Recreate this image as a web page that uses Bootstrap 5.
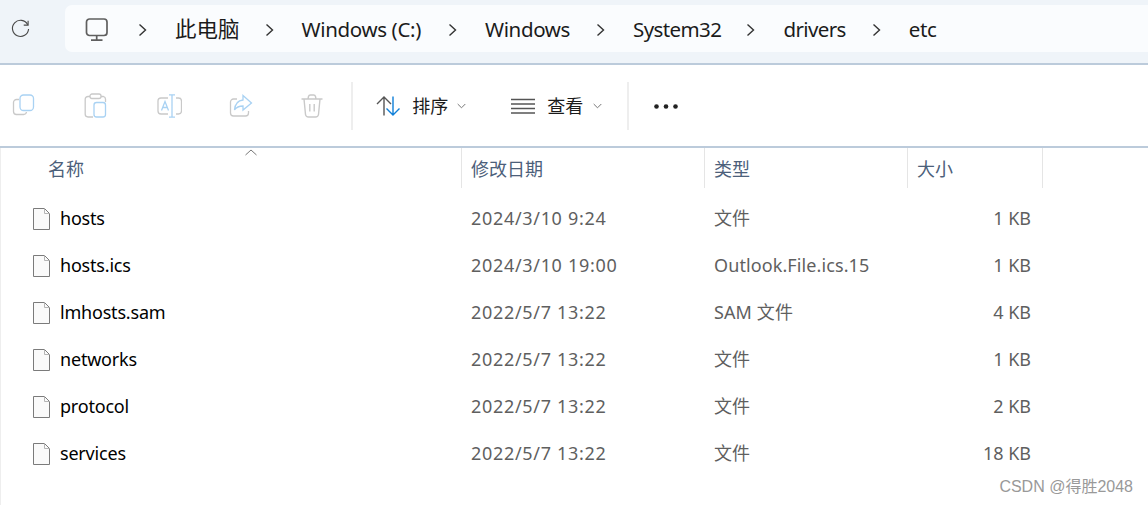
<!DOCTYPE html>
<html lang="zh">
<head>
<meta charset="utf-8">
<title>etc</title>
<link href="https://cdn.jsdelivr.net/npm/bootstrap@5.3.0/dist/css/bootstrap.min.css" rel="stylesheet">
<style>
html,body{margin:0;height:505px;overflow:hidden;background:#fff}
body{font-family:"Noto Sans","Noto Sans CJK SC",sans-serif;color:#1b1b1b;position:relative}
svg{display:block;flex:none}
.addr{height:65px;background:#eff4f9;border-bottom:2px solid #bccbdb;padding:5px 0 0 11px;box-sizing:border-box}
.refresh{width:54px;height:47px}
.crumbs{flex:1;height:47px;background:#fafcfe;border-radius:7px 0 0 7px;padding:2px 0 0 20px;gap:25px;font-size:20.5px;letter-spacing:-.35px;white-space:nowrap}
.crumbs .chev{margin-right:3px}
.crumbs .chev-first{margin-left:4px}
.crumbs .cjk-crumb{font-size:21.5px;letter-spacing:0}
.crumbs .crumb-c{margin-right:2px}
.crumbs .crumb-win{margin-right:1px}
.crumbs .crumb-tight{letter-spacing:-.6px}
.crumbs .crumb-drv{margin-right:1px}
.tools{height:83px;border-bottom:2px solid #bccbdb;padding:1px 0 0 12px;font-size:18px}
.tool-slot{width:72.3px}
.tool-slot-last{width:50px}
.vline{width:2px;height:48px;background:#eeeeee;flex:none}
.cmd{gap:12px}
.cmd-sort{margin-left:23px;gap:11px}
.cmd-view{margin-left:45px}
.cmd-chev{margin-left:-2px}
.vline-second{margin-left:25px}
.dots{margin-left:25px}
.filegrid{display:grid;grid-template-columns:461px 243px 203px 136px}
.head{height:40px;margin-bottom:7px;color:#4c607a;font-size:18px}
.head>div{padding-left:9px;border-left:1px solid #e5e5e5;height:40px;line-height:43px}
.head>div:first-child{border-left:0;padding-left:48px;position:relative}
.head>div:last-child{border-right:1px solid #e5e5e5}
.sort-mark{position:absolute;left:245px;top:1px}
.filerow{height:47px;align-items:center;font-size:18px;color:#5f5f5f}
.filerow>div{padding-left:10px;line-height:47px;white-space:nowrap}
.filerow>div:first-child{padding-left:33px;color:#000;letter-spacing:-.2px}
.filerow>div:nth-child(2){letter-spacing:.68px}
.filerow>div:nth-child(3){letter-spacing:.1px}
.filerow>div:last-child{text-align:right;padding-right:12px;padding-left:0}
.fname{gap:10px}
.mark-text{position:absolute;right:15px;bottom:8px;font-family:"Liberation Sans","Noto Sans CJK SC",sans-serif;font-size:16px;color:#999;line-height:20px}
.leftedge{position:absolute;left:0;top:148px;bottom:0;width:1px;background:#eeeeee}
</style>
</head>
<body>
<div class="addr d-flex">
  <div class="refresh d-flex align-items-center">
    <svg width="19" height="20" viewBox="0 0 20 20" fill="none" stroke="#4a4a4a" stroke-width="1.2"><path d="M17.6 5.5A8.5 8.5 0 1 0 18.5 10"/><path d="M18 1.2V5.9H13.4"/></svg>
  </div>
  <div class="crumbs d-flex align-items-center">
    <svg width="24" height="24" viewBox="0 0 24 24" fill="none" stroke="#5f5f5f" stroke-width="1.7"><rect x="1.5" y="1" width="20.5" height="16.5" rx="3"/><path d="M11.7 18v3.5M6 22.2h11.5"/></svg>
    <svg class="chev chev-first" width="9" height="14" viewBox="0 0 9 14" fill="none" stroke="#333" stroke-width="1.4"><path d="M1.5 1.5 7.5 7l-6 5.5"/></svg>
    <span class="cjk-crumb">此电脑</span>
    <svg class="chev" width="9" height="14" viewBox="0 0 9 14" fill="none" stroke="#333" stroke-width="1.4"><path d="M1.5 1.5 7.5 7l-6 5.5"/></svg>
    <span class="crumb-c">Windows (C:)</span>
    <svg class="chev" width="9" height="14" viewBox="0 0 9 14" fill="none" stroke="#333" stroke-width="1.4"><path d="M1.5 1.5 7.5 7l-6 5.5"/></svg>
    <span class="crumb-win">Windows</span>
    <svg class="chev" width="9" height="14" viewBox="0 0 9 14" fill="none" stroke="#333" stroke-width="1.4"><path d="M1.5 1.5 7.5 7l-6 5.5"/></svg>
    <span class="crumb-tight">System32</span>
    <svg class="chev" width="9" height="14" viewBox="0 0 9 14" fill="none" stroke="#333" stroke-width="1.4"><path d="M1.5 1.5 7.5 7l-6 5.5"/></svg>
    <span class="crumb-tight crumb-drv">drivers</span>
    <svg class="chev" width="9" height="14" viewBox="0 0 9 14" fill="none" stroke="#333" stroke-width="1.4"><path d="M1.5 1.5 7.5 7l-6 5.5"/></svg>
    <span>etc</span>
  </div>
</div>

<div class="tools d-flex align-items-center">
  <div class="tool-slot">
    <svg width="24" height="24" viewBox="0 0 24 24" fill="none" stroke-width="1.3"><path d="M7 5.5H4.5A3 3 0 0 0 1.5 8.5v9A3 3 0 0 0 4.5 20.500h7a3 3 0 0 0 3-2.500" stroke="#c9c9c9"/><rect x="8" y="1" width="13.500" height="15.500" rx="3.500" stroke="#a9d2f3"/></svg>
  </div>
  <div class="tool-slot">
    <svg width="24" height="26" viewBox="0 0 24 26" fill="none" stroke-width="1.3"><path d="M6 3.500H4A2.800 2.800 0 0 0 1.200 6.300v15A2.800 2.800 0 0 0 4 24h5M17 3.500h2.500A2.800 2.800 0 0 1 21.500 6v3" stroke="#c9c9c9"/><rect x="6" y="1" width="11" height="4.500" rx="2" stroke="#c9c9c9"/><rect x="10" y="9.500" width="11.500" height="14.500" rx="2.500" stroke="#a9d2f3"/></svg>
  </div>
  <div class="tool-slot">
    <svg width="25" height="24" viewBox="0 0 25 24" fill="none" stroke-width="1.3"><path d="M11 4H4A3 3 0 0 0 1 7v10a3 3 0 0 0 3 3h7M19 4h2.500a3 3 0 0 1 3 3v10a3 3 0 0 1-3 3H19" stroke="#c9c9c9"/><path d="M12 .8h6M15 .8v22.400M12 23.200h6M4.500 16.500 8 7.500l3.500 9M5.700 13.500h4.600" stroke="#a9d2f3"/></svg>
  </div>
  <div class="tool-slot">
    <svg width="24" height="24" viewBox="0 0 24 24" fill="none" stroke-width="1.3"><path d="M8 5H4.500a3 3 0 0 0-3 3v11a3 3 0 0 0 3 3h12a3 3 0 0 0 3-3v-2" stroke="#c9c9c9"/><path d="M14 1.500 22.500 9 14 16v-4c-4 0-6.500 1-8.500 4 .5-5.500 3.500-9.500 8.500-10z" stroke="#a9d2f3"/></svg>
  </div>
  <div class="tool-slot-last">
    <svg width="22" height="24" viewBox="0 0 22 24" fill="none" stroke="#c9c9c9" stroke-width="1.4"><path d="M.5 5h21M7 5 7.500 2.500A2 2 0 0 1 9.500 1h3a2 2 0 0 1 2 1.500L15 5M3 5l1.500 15.500A3 3 0 0 0 7.500 23h7a3 3 0 0 0 3-2.500L19 5M8.800 10v7.500M13.200 10v7.500"/></svg>
  </div>
  <div class="vline"></div>
  <div class="cmd cmd-sort d-flex align-items-center">
    <svg width="25" height="20" viewBox="0 0 25 20" fill="none" stroke-width="1.4"><path d="M8 19.500V1M1 8l7-7 7 7" stroke="#555"/><path d="M17 .5V19M10.500 12.500 17 19l6.500-6.500" stroke="#0f7fd8"/></svg>
    <span>排序</span>
    <svg class="cmd-chev" width="9" height="6" viewBox="0 0 9 6" fill="none" stroke="#777"><path d="M.7 1 4.500 4.800 8.300 1"/></svg>
  </div>
  <div class="cmd cmd-view d-flex align-items-center">
    <svg width="24" height="16" viewBox="0 0 24 16" fill="none" stroke="#555" stroke-width="1.400"><path d="M0 1.500h24M0 6h24M0 10.500h24M0 15h24"/></svg>
    <span>查看</span>
    <svg class="cmd-chev" width="9" height="6" viewBox="0 0 9 6" fill="none" stroke="#777"><path d="M.7 1 4.500 4.800 8.300 1"/></svg>
  </div>
  <div class="vline vline-second"></div>
  <svg class="dots" width="24" height="5" viewBox="0 0 24 5" fill="#222"><circle cx="2.500" cy="2.500" r="2.300"/><circle cx="12" cy="2.500" r="2.300"/><circle cx="21.500" cy="2.500" r="2.300"/></svg>
</div>

<div class="filegrid head">
  <div>名称
    <svg class="sort-mark" width="12" height="7" viewBox="0 0 12 7" fill="none" stroke="#777"><path d="M.5 6 6 1l5.500 5"/></svg>
  </div>
  <div>修改日期</div>
  <div>类型</div>
  <div>大小</div>
</div>

<div class="filegrid filerow"><div class="fname d-flex align-items-center"><svg width="17" height="22" viewBox="0 0 17 22"><path d="M.5.5h11l5 5v16H.5z" fill="#fafafa" stroke="#7b7b7b"/><path d="M11.500.5v5h5" fill="none" stroke="#b5b5b5"/></svg><span>hosts</span></div><div>2024/3/10 9:24</div><div>文件</div><div>1 KB</div></div>
<div class="filegrid filerow"><div class="fname d-flex align-items-center"><svg width="17" height="22" viewBox="0 0 17 22"><path d="M.5.5h11l5 5v16H.5z" fill="#fafafa" stroke="#7b7b7b"/><path d="M11.500.5v5h5" fill="none" stroke="#b5b5b5"/></svg><span>hosts.ics</span></div><div>2024/3/10 19:00</div><div>Outlook.File.ics.15</div><div>1 KB</div></div>
<div class="filegrid filerow"><div class="fname d-flex align-items-center"><svg width="17" height="22" viewBox="0 0 17 22"><path d="M.5.5h11l5 5v16H.5z" fill="#fafafa" stroke="#7b7b7b"/><path d="M11.500.5v5h5" fill="none" stroke="#b5b5b5"/></svg><span>lmhosts.sam</span></div><div>2022/5/7 13:22</div><div>SAM 文件</div><div>4 KB</div></div>
<div class="filegrid filerow"><div class="fname d-flex align-items-center"><svg width="17" height="22" viewBox="0 0 17 22"><path d="M.5.5h11l5 5v16H.5z" fill="#fafafa" stroke="#7b7b7b"/><path d="M11.500.5v5h5" fill="none" stroke="#b5b5b5"/></svg><span>networks</span></div><div>2022/5/7 13:22</div><div>文件</div><div>1 KB</div></div>
<div class="filegrid filerow"><div class="fname d-flex align-items-center"><svg width="17" height="22" viewBox="0 0 17 22"><path d="M.5.5h11l5 5v16H.5z" fill="#fafafa" stroke="#7b7b7b"/><path d="M11.500.5v5h5" fill="none" stroke="#b5b5b5"/></svg><span>protocol</span></div><div>2022/5/7 13:22</div><div>文件</div><div>2 KB</div></div>
<div class="filegrid filerow"><div class="fname d-flex align-items-center"><svg width="17" height="22" viewBox="0 0 17 22"><path d="M.5.5h11l5 5v16H.5z" fill="#fafafa" stroke="#7b7b7b"/><path d="M11.500.5v5h5" fill="none" stroke="#b5b5b5"/></svg><span>services</span></div><div>2022/5/7 13:22</div><div>文件</div><div>18 KB</div></div>

<div class="leftedge"></div>
<div class="mark-text">CSDN @得胜2048</div>
<script src="https://cdn.jsdelivr.net/npm/bootstrap@5.3.0/dist/js/bootstrap.bundle.min.js"></script>
</body>
</html>
